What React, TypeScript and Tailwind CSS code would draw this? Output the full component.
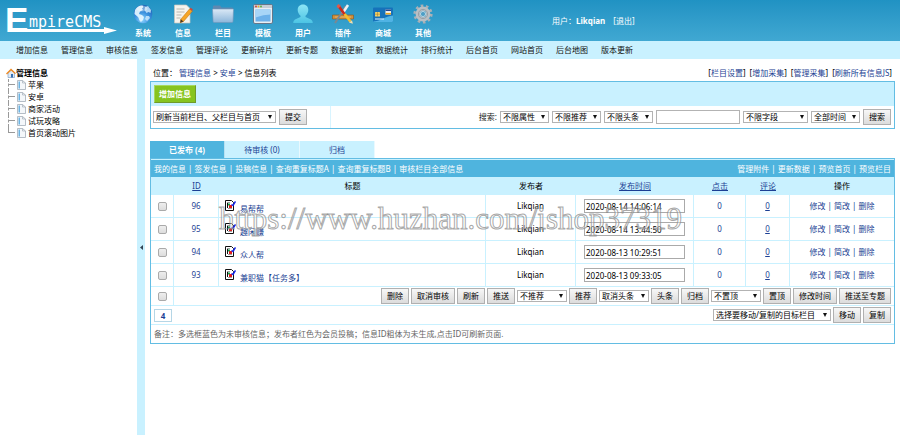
import React, { useState } from 'react';

const navItems = [
  '增加信息', '管理信息', '审核信息', '签发信息', '管理评论', '更新碎片', '更新专题',
  '数据更新', '数据统计', '排行统计', '后台首页', '网站首页', '后台地图', '版本更新',
];

const categories = ['苹果', '安卓', '商家活动', '试玩攻略', '首页滚动图片'];

const rows = [
  { id: 96, title: '易帮帮', time: '2020-08-14 14:06:14' },
  { id: 95, title: '趣闲赚', time: '2020-08-14 13:44:50' },
  { id: 94, title: '众人帮', time: '2020-08-13 10:29:51' },
  { id: 93, title: '兼职猫【任务多】', time: '2020-08-13 09:33:05' },
];

const GlobeIcon = () => (
  <svg className="size-5" viewBox="0 0 20 20">
    <defs>
      <radialGradient id="globe" cx="45%" cy="80%" r="80%">
        <stop offset="0" stopColor="#8fd6ff" />
        <stop offset="0.5" stopColor="#3a90de" />
        <stop offset="1" stopColor="#1a5fb4" />
      </radialGradient>
    </defs>
    <circle cx="10" cy="10" r="9.3" fill="url(#globe)" />
    <path d="M2 6c2-3.500 5-5 7.500-4.500l1 1.500-1.500 1.500 1 1.500-3 1.500-1 2.500 3 1 2 2-1 3-2 2c-2-1-2-4-3-5L1.500 10z" fill="#e8f7ff" opacity=".9" />
    <path d="M12 3l3-1 3 4-.5 3-2-1-2 1-2-3zM13 12l3 0 1 2-3 3-2-2z" fill="#d2edff" opacity=".8" />
    <ellipse cx="9" cy="4.500" rx="5.500" ry="3" fill="#fff" opacity=".35" />
  </svg>
);

const NoteIcon = () => (
  <svg className="size-5" viewBox="0 0 20 20">
    <path d="M1.500 1h12l3.500 3.500V19h-15.500z" fill="#f6f4ee" stroke="#c9c6bd" strokeWidth=".7" />
    <path d="M3.500 5h8M3.500 8h8M3.500 11h5M3.500 14h4" stroke="#b3b1a9" strokeWidth=".9" />
    <path d="M16.500 5l3 2-9 10.500-3.300 1.200.6-3.500z" fill="#f6a526" stroke="#b86b0c" strokeWidth=".5" />
    <path d="M16.500 5l1.200-1.300 2.200 1.800-.9 1.300z" fill="#d94132" />
    <path d="M7.800 15.200l-.6 3.500 3.300-1.200z" fill="#4b3b28" />
  </svg>
);

const FolderIcon = () => (
  <svg className="h-5 w-6" viewBox="0 0 24 20">
    <defs>
      <linearGradient id="folder" x1="0" y1="0" x2="0" y2="1">
        <stop offset="0" stopColor="#dbe9f6" />
        <stop offset="1" stopColor="#8db6da" />
      </linearGradient>
    </defs>
    <path d="M2 2.500q0-1 1-1h6l1.500 2H21q1 0 1 1v12H2z" fill="#5f88b0" />
    <path d="M1.500 5h21l-.5 12.500q-.1 1-1.200 1H3.200q-1 0-1.100-1z" fill="url(#folder)" stroke="#7397bb" strokeWidth=".6" />
  </svg>
);

const WindowIcon = () => (
  <svg className="size-5" viewBox="0 0 20 20">
    <rect x=".5" y=".5" width="19" height="19" rx="1.500" fill="#e9eef2" stroke="#65778a" />
    <path d="M1 1h18v3H1z" fill="#c5ced6" />
    <circle cx="3" cy="2.500" r=".9" fill="#d9362b" />
    <circle cx="5.500" cy="2.500" r=".9" fill="#f0b41e" />
    <circle cx="8" cy="2.500" r=".9" fill="#5bae35" />
    <rect x="2.500" y="5.500" width="15" height="12" fill="#6db1ea" />
    <path d="M2.500 5.500h15v5q-7 0-15 3z" fill="#a8d5f7" />
  </svg>
);

const UserIcon = () => (
  <svg className="size-5" viewBox="0 0 20 20">
    <defs>
      <linearGradient id="user" x1="0" y1="0" x2="0" y2="1">
        <stop offset="0" stopColor="#8ce5f5" />
        <stop offset="1" stopColor="#4cc4e4" />
      </linearGradient>
    </defs>
    <path d="M10 .5c3.300 0 5.300 2.300 5.300 5.500 0 2.500-1.300 4.500-2.800 5.700v1.300l5.500 2.500q1.800 1 1.800 3.500H.2q0-2.500 1.800-3.500L7.500 13v-1.300C6 10.500 4.700 8.500 4.700 6 4.700 2.800 6.700.5 10 .5z" fill="url(#user)" />
  </svg>
);

const PluginIcon = () => (
  <svg className="h-5 w-6" viewBox="0 0 24 20">
    <path d="M1.500 11h21v4h-21z" fill="#d0903c" stroke="#8c5518" strokeWidth=".6" />
    <path d="M4 13h16" stroke="#e7b468" />
    <path d="M15 2L4 19" stroke="#7d8790" strokeWidth="2" />
    <path d="M17 1l-5.500 8.500" stroke="#eef1f3" strokeWidth="2.500" />
    <path d="M8 2.500l6 8.500" stroke="#c92b1d" strokeWidth="2.800" />
    <path d="M13.500 10l6 7.500" stroke="#f4bd2c" strokeWidth="2.800" />
    <path d="M18 18.500l3-2 .9 3.200z" fill="#f6deae" />
    <path d="M7.500 0l2.500 2-3 2.500L5.500 2z" fill="#e2574a" />
  </svg>
);

const CardIcon = () => (
  <svg className="size-5" viewBox="0 0 20 20">
    <rect y="3.500" width="20" height="14.500" rx="1" fill="#1672ba" />
    <path d="M0 17.500c7 0 12-5 20-6V17q0 1-1 1H1z" fill="#50b3e4" />
    <rect x="2" y="8" width="5" height="4.500" rx=".6" fill="#f0cf6d" />
    <path d="M2 10.200h5M4.500 8v4.500" stroke="#a17d22" strokeWidth=".5" />
    <path d="M12.500 5.500h5.500v5h-5.500z" fill="#fff" />
    <path d="M12.500 5.500h5.500v1.600h-5.500z" fill="#22468f" />
    <path d="M12.500 8.800h5.500v1.700h-5.500z" fill="#e8a420" />
    <path d="M2 15h9" stroke="#e4f4ff" />
  </svg>
);

const GearIcon = () => (
  <svg className="size-5" viewBox="0 0 20 20">
    <circle cx="10" cy="10" r="8.200" fill="none" stroke="#a9b0b6" strokeWidth="2.800" strokeDasharray="2.580 2.580" />
    <circle cx="10" cy="10" r="5.300" fill="none" stroke="#b9bfc4" strokeWidth="4.200" />
    <circle cx="10" cy="10" r="4.600" fill="none" stroke="#8f989f" strokeWidth=".8" />
    <circle cx="10" cy="10" r="2.600" fill="#4d9fc6" stroke="#dde1e4" strokeWidth=".8" />
  </svg>
);

const modules = [
  { label: '系统', icon: <GlobeIcon /> },
  { label: '信息', icon: <NoteIcon /> },
  { label: '栏目', icon: <FolderIcon /> },
  { label: '模板', icon: <WindowIcon /> },
  { label: '用户', icon: <UserIcon /> },
  { label: '插件', icon: <PluginIcon /> },
  { label: '商城', icon: <CardIcon /> },
  { label: '其他', icon: <GearIcon /> },
];

const Logo = () => (
  <svg className="ml-1 h-[41px] w-[116px] shrink-0" viewBox="0 0 116 41" fill="#fff">
    <text x="1" y="32" fontFamily="Liberation Sans" fontSize="35" fontWeight="700">E</text>
    <text x="25" y="27" fontFamily="DejaVu Sans Mono" fontSize="15">mpireCMS</text>
    <path d="M4 29h96v-2l13 3.500-13 3.500v-2H4z" />
  </svg>
);

const HomeIcon = () => (
  <svg className="size-[10px]" viewBox="0 0 10 10">
    <path d="M2 5v4.500h6.500V4.500L5.500 2z" fill="#dfeaf5" stroke="#6b92bd" strokeWidth=".6" />
    <path d="M0 5.500L5 .5l5 4.700-1 .8-4-3.500-4 4z" fill="#ee8a22" />
    <path d="M5 6h2v3.500H5z" fill="#3973b5" />
  </svg>
);

const PageIcon = () => (
  <svg className="h-[10px] w-[9px]" viewBox="0 0 9 10">
    <path d="M.5.5h5l3 2.500v6.500h-8z" fill="#f4f7fa" stroke="#a3adb7" strokeWidth=".8" />
    <path d="M1.500 1.500h1.500v7H1.500z" fill="#6bb3e2" />
    <path d="M5.500.5V3h3" fill="none" stroke="#a3adb7" strokeWidth=".7" />
  </svg>
);

const EditIcon = () => (
  <svg className="mb-0.5 size-[11px]" viewBox="0 0 11 11">
    <path d="M.5.5h6l2 2v8h-8z" fill="#fff" stroke="#111" />
    <path d="M2 2.500h3M3 8.500h4" stroke="#777" strokeWidth=".7" />
    <path d="M2.500 3v5" stroke="#111" />
    <path d="M3 3.500h2v2H3z" fill="#16a34a" />
    <path d="M4 5h3v3H4z" fill="#e31c1c" />
    <path d="M6.500 4.500l1.500 1L10.500 1.500" fill="none" stroke="#1427e8" strokeWidth="1.500" />
  </svg>
);

const Button = ({ children }: { children: React.ReactNode }) => (
  <button
    type="button"
    className="h-4 shrink-0 border border-[#b0b0b0] bg-linear-to-b from-[#f7f7f7] to-[#dcdcdc] px-[5px] text-[8px] leading-[12px] whitespace-nowrap text-black"
  >
    {children}
  </button>
);

const Select = ({ label, width }: { label: string; width: string }) => (
  <span className={`relative inline-block h-3 shrink-0 ${width}`}>
    <select
      aria-label={label}
      className="block h-3 w-full appearance-none border border-[#b3b3b3] bg-white pr-2 pl-0.5 text-[8px] leading-[10px] text-black"
    >
      <option>{label}</option>
    </select>
    <svg className="pointer-events-none absolute top-1 right-1 size-1" viewBox="0 0 4 4">
      <path d="M0 0h4L2 4z" fill="#111" />
    </svg>
  </span>
);

const Links = ({ items }: { items: string[] }) => (
  <>
    {items.map((item, i) => (
      <React.Fragment key={item}>
        {i > 0 && ' | '}
        <a href="#">{item}</a>
      </React.Fragment>
    ))}
  </>
);

const Header = () => (
  <header>
    <div className="flex h-[41px] items-center bg-linear-to-b from-[#2092c3] to-[#40a8d2] text-white">
      <Logo />
      <div className="ml-[3px] flex">
        {modules.map((m) => (
          <a key={m.label} href="#" className="flex w-10 flex-col items-center gap-1 font-bold">
            {m.icon}
            <span className="leading-[10px]">{m.label}</span>
          </a>
        ))}
      </div>
      <div className="ml-[109px] whitespace-nowrap">
        用户：<b>Likqian</b>
        <a href="#" className="ml-2">[退出]</a>
      </div>
    </div>
    <nav className="flex h-[18px] items-center gap-[13px] bg-[#c9f1ff] px-4 whitespace-nowrap text-[#111]">
      {navItems.map((item) => (
        <a key={item} href="#">{item}</a>
      ))}
    </nav>
  </header>
);

const Sidebar = () => (
  <aside className="w-[137px] shrink-0 pt-[7px] pl-1.5">
    <a href="#" className="flex h-[13px] items-center font-bold text-black">
      <HomeIcon />
      管理信息
    </a>
    <ul className="ml-0.5">
      {categories.map((name, i) => (
        <li key={name} className="flex h-3">
          <span className={`w-px border-l border-dashed border-[#999] ${i === categories.length - 1 ? 'h-1.5' : 'h-3'}`} />
          <span className="mr-0.5 h-1.5 w-1.5 border-b border-dashed border-[#999]" />
          <a href="#" className="flex items-center gap-0.5 text-black">
            <PageIcon />
            {name}
          </a>
        </li>
      ))}
    </ul>
  </aside>
);

const SearchBox = () => (
  <section className="border border-[#63bde3]">
    <div className="flex h-6 items-center bg-[#c9f1ff] px-[3px]">
      <button
        type="button"
        className="h-[18px] border border-t-[#a8d860] border-r-[#6f9a2a] border-b-[#6f9a2a] border-l-[#a8d860] bg-[#86c41f] px-1 text-[8px] font-bold text-white"
      >
        增加信息
      </button>
    </div>
    <div className="flex h-[22px] items-center">
      <div className="flex h-full w-[180px] shrink-0 items-center gap-[3px] border-r border-[#d8f4ff] pl-0.5">
        <Select label="刷新当前栏目、父栏目与首页" width="w-[123px]" />
        <Button>提交</Button>
      </div>
      <form className="flex flex-1 items-center justify-end gap-[3px] pr-[3px]">
        <label htmlFor="keyword">搜索:</label>
        <Select label="不限属性" width="w-[49px]" />
        <Select label="不限推荐" width="w-[49px]" />
        <Select label="不限头条" width="w-[49px]" />
        <input id="keyword" type="text" className="h-[14px] w-[84px] border border-[#b3b3b3] bg-white px-0.5" />
        <Select label="不限字段" width="w-[65px]" />
        <Select label="全部时间" width="w-[49px]" />
        <Button>搜索</Button>
      </form>
    </div>
  </section>
);

const InfoTable = () => {
  const cell = 'border-b border-r border-[#c9f1ff] p-0 text-center';
  return (
    <table className="w-full table-fixed border-separate border-spacing-0">
      <colgroup>
        <col className="w-[23px]" />
        <col className="w-[45px]" />
        <col />
        <col className="w-[90px]" />
        <col className="w-[118px]" />
        <col className="w-[52px]" />
        <col className="w-[44px]" />
        <col className="w-[104px]" />
      </colgroup>
      <thead>
        <tr className="h-[18px] bg-[#c9f1ff] text-black [&>th]:p-0 [&>th]:font-normal">
          <th />
          <th><a href="#" className="text-[#1c3f94] underline">ID</a></th>
          <th>标题</th>
          <th>发布者</th>
          <th><a href="#" className="text-[#1c3f94] underline">发布时间</a></th>
          <th><a href="#" className="text-[#1c3f94] underline">点击</a></th>
          <th><a href="#" className="text-[#1c3f94] underline">评论</a></th>
          <th>操作</th>
        </tr>
      </thead>
      <tbody>
        {rows.map((row) => (
          <tr key={row.id} className="h-[23px] text-[#1c3f94]">
            <td className={cell}><Tick label={`选择 ${row.id}`} /></td>
            <td className={cell}><a href="#">{row.id}</a></td>
            <td className={cell}>
              <div className="flex items-end gap-1 pl-1.5">
                <EditIcon />
                <a href="#" className="leading-[8px]">{row.title}</a>
              </div>
            </td>
            <td className={`${cell} text-black`}>Likqian</td>
            <td className={cell}>
              <input
                type="text"
                aria-label={`发布时间 ${row.id}`}
                defaultValue={row.time}
                className="mx-auto block h-[14px] w-[101px] border border-[#aaa] bg-white px-px text-black"
              />
            </td>
            <td className={cell}>0</td>
            <td className={cell}><a href="#" className="underline">0</a></td>
            <td className="border-b border-[#c9f1ff] p-0 text-center">
              <Links items={['修改', '简改', '删除']} />
            </td>
          </tr>
        ))}
        <tr className="h-[19px]">
          <td className={cell}><Tick label="全选" /></td>
          <td colSpan={7} className="border-b border-[#c9f1ff] p-0">
            <div className="flex items-center justify-end gap-0.5 pr-[3px]">
              <Button>删除</Button>
              <Button>取消审核</Button>
              <Button>刷新</Button>
              <Button>推送</Button>
              <Select label="不推荐" width="w-[50px]" />
              <Button>推荐</Button>
              <Select label="取消头条" width="w-[50px]" />
              <Button>头条</Button>
              <Button>归档</Button>
              <Select label="不置顶" width="w-[50px]" />
              <Button>置顶</Button>
              <Button>修改时间</Button>
              <Button>推送至专题</Button>
            </div>
          </td>
        </tr>
        <tr className="h-[19px]">
          <td colSpan={8} className="border-b border-[#c9f1ff] p-0">
            <div className="flex items-center gap-0.5 px-[3px]">
              <b className="mr-auto h-[13px] w-[18px] border border-[#b5d6e6] text-center leading-[11px] text-[#1c3f94]">4</b>
              <Select label="选择要移动/复制的目标栏目" width="w-[118px]" />
              <Button>移动</Button>
              <Button>复制</Button>
            </div>
          </td>
        </tr>
        <tr className="h-[18px]">
          <td colSpan={8} className="p-0 pl-[3px] text-[#666]">
            备注：多选框蓝色为未审核信息；发布者红色为会员投稿；信息ID粗体为未生成,点击ID可刷新页面.
          </td>
        </tr>
      </tbody>
    </table>
  );
};

const Tick = ({ label }: { label: string }) => (
  <input
    type="checkbox"
    aria-label={label}
    className="mx-auto block size-[9px] appearance-none rounded-[2px] border border-[#aaa] bg-linear-to-b from-[#eee] to-[#ddd] checked:bg-[#4fb4de]"
  />
);

export default function App() {
  const [tab, setTab] = useState(0);
  const [sidebarOpen, setSidebarOpen] = useState(true);

  return (
    <div className="flex min-h-screen flex-col bg-white font-['Noto_Sans','Noto_Sans_CJK_SC',sans-serif] text-[8px] leading-[12px] text-[#222]">
      <Header />
      <div className="flex flex-1">
        {sidebarOpen && <Sidebar />}
        <button
          type="button"
          aria-label="切换侧栏"
          onClick={() => setSidebarOpen(!sidebarOpen)}
          className="flex w-2 shrink-0 items-center justify-center bg-[#c9f1ff]"
        >
          <svg className="h-[5px] w-[3px]" viewBox="0 0 3 5">
            <path d="M3 0v5L0 2.500z" fill="#345" />
          </svg>
        </button>

        <main className="min-w-0 flex-1 px-[5px] pt-2">
          <div className="flex justify-between px-[3px] text-[#1c3f94]">
            <div className="text-black">
              位置： <a href="#" className="text-[#1c3f94]">管理信息</a> &gt; <a href="#" className="text-[#1c3f94]">安卓</a> &gt; 信息列表
            </div>
            <div className="flex gap-1">
              {['栏目设置', '增加采集', '管理采集', '刷新所有信息JS'].map((name) => (
                <span key={name} className="text-black">
                  [<a href="#" className="text-[#1c3f94]">{name}</a>]
                </span>
              ))}
            </div>
          </div>

          <div className="mt-0.5">
            <SearchBox />
          </div>

          <div className="mt-3 flex">
            {['已发布 (4)', '待审核 (0)', '归档'].map((name, i) => (
              <button
                key={name}
                type="button"
                onClick={() => setTab(i)}
                className={`h-[17px] w-[75px] border-r border-white/60 ${tab === i ? 'bg-[#4fb4de] font-bold text-white' : 'bg-[#c9f1ff] text-[#1c3f94]'}`}
              >
                {name}
              </button>
            ))}
          </div>

          <section className="relative border border-[#63bde3]">
            <div className="flex h-[18px] items-center justify-between border-t border-[#c9f1ff] bg-[#4fb4de] px-[3px] text-white">
              <div>
                <Links items={['我的信息', '签发信息', '投稿信息', '查询重复标题A', '查询重复标题B', '审核栏目全部信息']} />
              </div>
              <div>
                <Links items={['管理附件', '更新数据', '预览首页', '预览栏目']} />
              </div>
            </div>
            <InfoTable />
            <div className="pointer-events-none absolute top-11 left-[68px] font-['Liberation_Serif',serif] text-[31px] leading-[32px] whitespace-nowrap text-white/40 [-webkit-text-stroke:1px_rgb(130_130_130/0.7)]">
              https://www.huzhan.com/ishop37319
            </div>
          </section>
        </main>
      </div>
    </div>
  );
}
